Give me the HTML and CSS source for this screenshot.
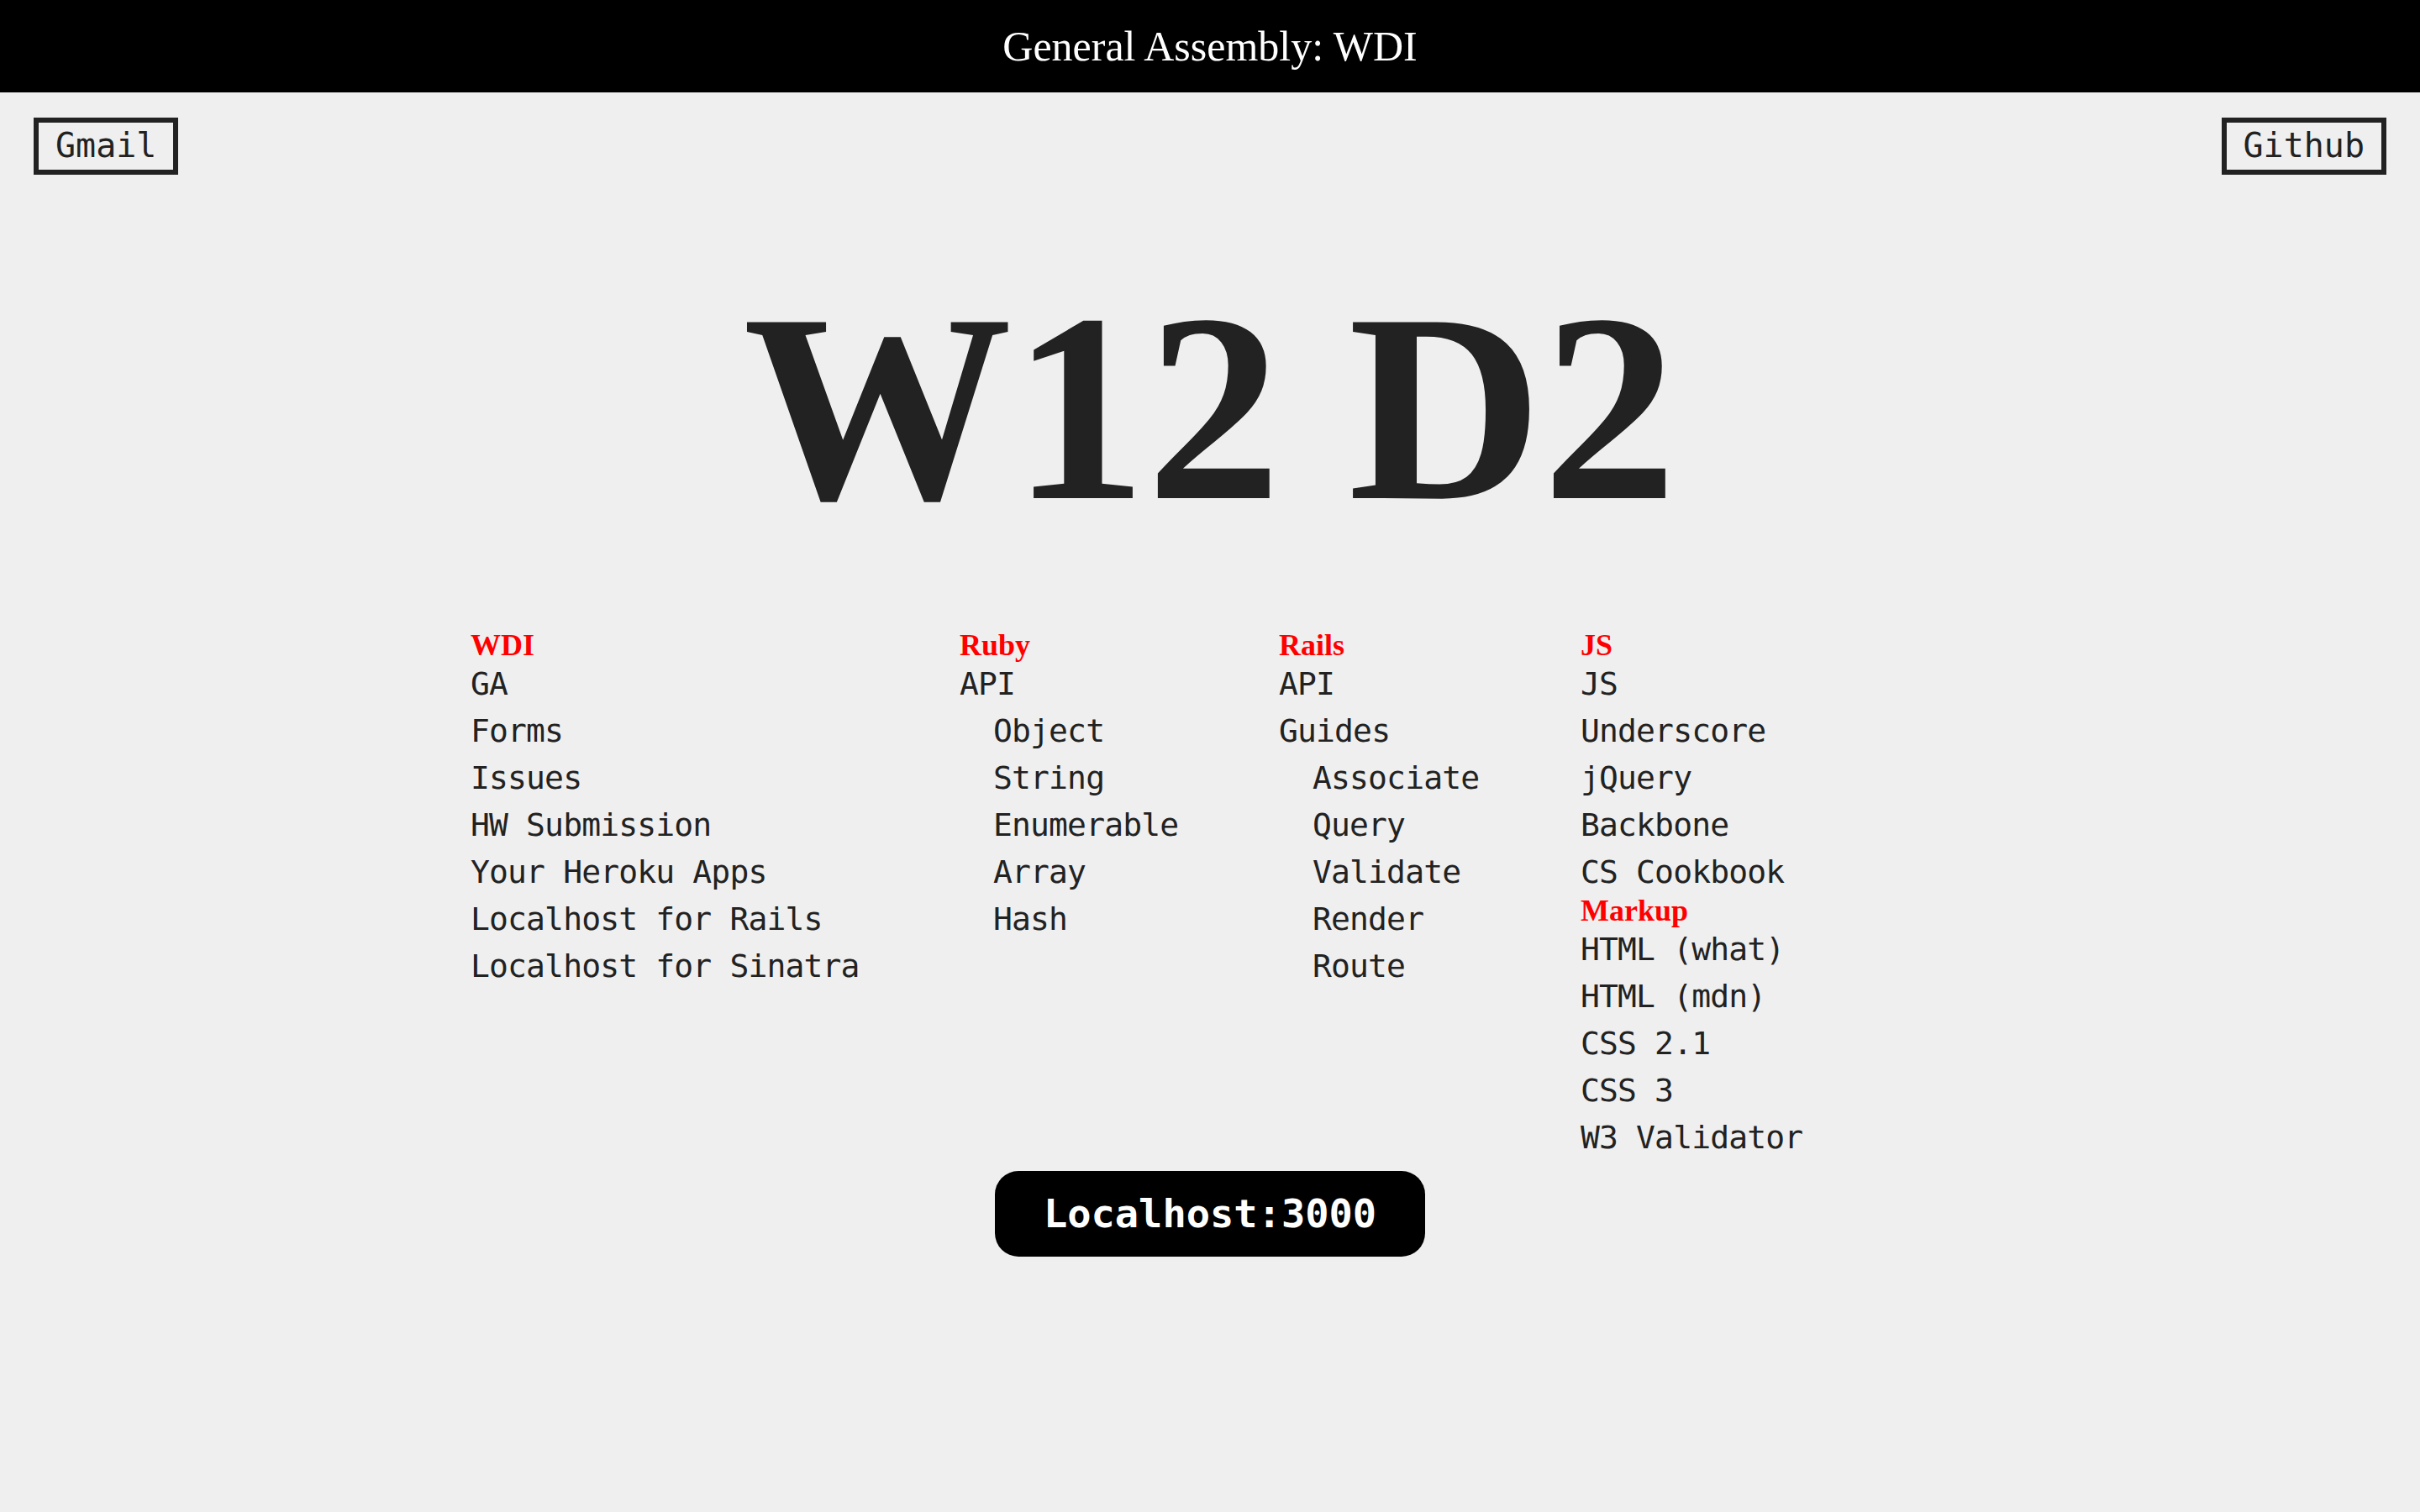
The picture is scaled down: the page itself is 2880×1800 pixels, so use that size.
FILE: index.html
```html
<!DOCTYPE html>
<html lang="en">
<head>
<meta charset="utf-8">
<title>General Assembly: WDI</title>
<link rel="stylesheet" href="styles.css">
</head>
<body>
<header class="topbar">General Assembly: WDI</header>
<nav class="quick-links">
  <a class="box-link" href="#">Gmail</a>
  <a class="box-link" href="#">Github</a>
</nav>
<h1 class="day-title">W12 D2</h1>
<section class="link-columns">
  <div class="link-col">
    <h2 class="col-heading">WDI</h2>
    <ul class="link-list">
      <li><a href="#">GA</a></li>
      <li><a href="#">Forms</a></li>
      <li><a href="#">Issues</a></li>
      <li><a href="#">HW Submission</a></li>
      <li><a href="#">Your Heroku Apps</a></li>
      <li><a href="#">Localhost for Rails</a></li>
      <li><a href="#">Localhost for Sinatra</a></li>
    </ul>
  </div>
  <div class="link-col">
    <h2 class="col-heading">Ruby</h2>
    <ul class="link-list">
      <li><a href="#">API</a></li>
      <li class="sub"><a href="#">Object</a></li>
      <li class="sub"><a href="#">String</a></li>
      <li class="sub"><a href="#">Enumerable</a></li>
      <li class="sub"><a href="#">Array</a></li>
      <li class="sub"><a href="#">Hash</a></li>
    </ul>
  </div>
  <div class="link-col">
    <h2 class="col-heading">Rails</h2>
    <ul class="link-list">
      <li><a href="#">API</a></li>
      <li><a href="#">Guides</a></li>
      <li class="sub"><a href="#">Associate</a></li>
      <li class="sub"><a href="#">Query</a></li>
      <li class="sub"><a href="#">Validate</a></li>
      <li class="sub"><a href="#">Render</a></li>
      <li class="sub"><a href="#">Route</a></li>
    </ul>
  </div>
  <div class="link-col">
    <h2 class="col-heading">JS</h2>
    <ul class="link-list">
      <li><a href="#">JS</a></li>
      <li><a href="#">Underscore</a></li>
      <li><a href="#">jQuery</a></li>
      <li><a href="#">Backbone</a></li>
      <li><a href="#">CS Cookbook</a></li>
    </ul>
    <h2 class="col-heading">Markup</h2>
    <ul class="link-list">
      <li><a href="#">HTML (what)</a></li>
      <li><a href="#">HTML (mdn)</a></li>
      <li><a href="#">CSS 2.1</a></li>
      <li><a href="#">CSS 3</a></li>
      <li><a href="#">W3 Validator</a></li>
    </ul>
  </div>
</section>
<div class="server-row">
  <a class="server-button" href="#">Localhost:3000</a>
</div>
</body>
</html>
```
FILE: styles.css
```css
html, body {
  margin: 0;
  padding: 0;
}

body {
  background: #efefef;
  color: #222;
  font-family: "DejaVu Sans Mono", "Liberation Mono", monospace;
}

a {
  color: inherit;
  text-decoration: none;
}

.topbar {
  height: 110px;
  line-height: 110px;
  background: #000;
  color: #fff;
  text-align: center;
  font-family: "Liberation Serif", "Times New Roman", serif;
  font-size: 50px;
}

.quick-links {
  display: flex;
  justify-content: space-between;
  align-items: flex-start;
  padding: 30px 40px 0;
}

.box-link {
  display: block;
  border: 6px solid #222;
  padding: 3px 20px 5px;
  font-size: 40px;
  line-height: 48px;
  color: #222;
}

.day-title {
  margin: 117px 0 0;
  font-family: "Liberation Serif", "Times New Roman", serif;
  font-weight: bold;
  font-size: 320px;
  line-height: 320px;
  text-align: center;
  color: #222;
}

.link-columns {
  width: 1760px;
  margin: 105px auto 0;
  display: grid;
  grid-template-columns: 582px 380px 359px 1fr;
}

.col-heading {
  margin: 0;
  font-family: "Liberation Serif", "Times New Roman", serif;
  font-weight: bold;
  font-size: 36px;
  line-height: 36px;
  color: #f00;
}

.link-list {
  list-style: none;
  margin: 0;
  padding: 0;
  font-size: 38px;
  letter-spacing: -0.85px;
  line-height: 56px;
  white-space: nowrap;
}

.link-list .sub {
  padding-left: 40px;
}

.server-row {
  display: flex;
  justify-content: center;
  margin-top: 12px;
}

.server-button {
  display: block;
  padding: 23px 58px;
  background: #000;
  color: #fff;
  border-radius: 28px;
  font-family: "DejaVu Sans Mono", "Liberation Mono", monospace;
  font-weight: bold;
  font-size: 47px;
  line-height: 56px;
}
```
